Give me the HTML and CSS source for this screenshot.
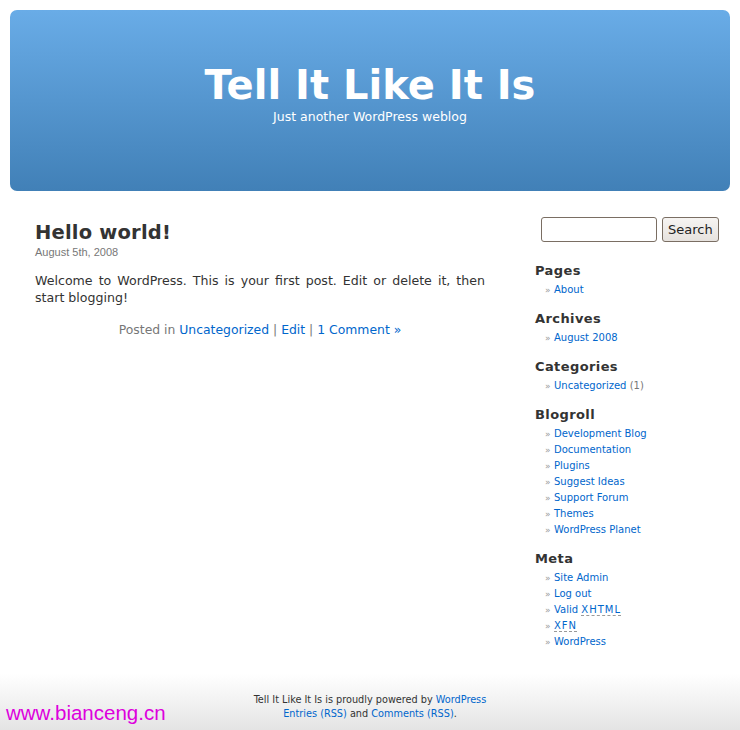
FILE: index.html
```html
<!DOCTYPE html>
<html lang="en">
  <head>
    <meta charset="utf-8" />
    <title>Tell It Like It Is</title>
    <link rel="stylesheet" href="styles.css">
  </head>
  <body>
    <div class="page">
      <div class="header">
        <h1><a href="#">Tell It Like It Is</a></h1>
        <div class="description">Just another WordPress weblog</div>
      </div>

      <div class="wrap">
        <div class="content">
          <div class="post">
            <h2><a href="#">Hello world!</a></h2>
            <small>August 5th, 2008</small>
            <div class="entry">
              <p>Welcome to WordPress. This is your first post. Edit or delete it, then start blogging!</p>
            </div>
            <p class="postmetadata">Posted in <a href="#">Uncategorized</a> | <a href="#">Edit</a> | <a href="#">1 Comment &raquo;</a></p>
          </div>
        </div>

        <div class="sidebar">
          <form class="searchform">
            <input type="text" class="s">
            <button type="button" class="searchsubmit">Search</button>
          </form>
          <ul>
            <li class="widget"><h2>Pages</h2>
              <ul><li><a href="#">About</a></li></ul>
            </li>
            <li class="widget"><h2>Archives</h2>
              <ul><li><a href="#">August 2008</a></li></ul>
            </li>
            <li class="widget"><h2>Categories</h2>
              <ul><li><a href="#">Uncategorized</a> (1)</li></ul>
            </li>
            <li class="widget"><h2>Blogroll</h2>
              <ul>
                <li><a href="#">Development Blog</a></li>
                <li><a href="#">Documentation</a></li>
                <li><a href="#">Plugins</a></li>
                <li><a href="#">Suggest Ideas</a></li>
                <li><a href="#">Support Forum</a></li>
                <li><a href="#">Themes</a></li>
                <li><a href="#">WordPress Planet</a></li>
              </ul>
            </li>
            <li class="widget"><h2>Meta</h2>
              <ul>
                <li><a href="#">Site Admin</a></li>
                <li><a href="#">Log out</a></li>
                <li><a href="#">Valid <abbr>XHTML</abbr></a></li>
                <li><a href="#"><abbr>XFN</abbr></a></li>
                <li><a href="#">WordPress</a></li>
              </ul>
            </li>
          </ul>
        </div>
      </div>

      <div class="footer">
        <p>Tell It Like It Is is proudly powered by <a href="#">WordPress</a><br>
        <a href="#">Entries (RSS)</a> and <a href="#">Comments (RSS)</a>.</p>
      </div>
      <div class="mark">www.bianceng.cn</div>
    </div>
  </body>
</html>
```

FILE: styles.css
```css
body{
  margin:0;
  background:#fff;
  color:#333;
  font:13px 'DejaVu Sans',sans-serif;
}
*{box-sizing:border-box}
a{color:#06c;text-decoration:none}

.page{
  width:740px;
  height:730px;
  position:relative;
  display:flex;
  flex-direction:column;
  overflow:hidden;
}

.header{
  margin:10px 10px 0;
  height:181px;
  border-radius:7px;
  background:linear-gradient(#69ace7,#4180b7);
  text-align:center;
  padding-top:50px;
}
.header h1{
  margin:0;
  font-size:40px;
  line-height:50px;
  font-weight:bold;
}
.header h1 a{color:#fff}
.header .description{
  color:#fff;
  font-size:12.5px;
  line-height:14px;
}

.wrap{
  display:flex;
  flex:1;
}
.content{
  width:450px;
  margin-left:35px;
  padding-top:31px;
}
.post h2{
  margin:0;
  font-size:19.5px;
  line-height:22px;
  font-weight:bold;
  letter-spacing:.2px;
}
.post h2 a{color:#333}
.post small{
  display:block;
  margin-top:1px;
  font:11px/14px 'Liberation Sans',sans-serif;
  color:#777;
}
.entry p{
  margin:13px 0 0;
  text-align:justify;
  font-size:12.6px;
  line-height:17px;
}
.postmetadata{
  margin:16px 0 0;
  text-align:center;
  font-size:12.4px;
  color:#777;
}

.sidebar{
  margin-left:50px;
  width:200px;
  padding-top:26px;
  font-size:10px;
}
.searchform{
  display:flex;
  gap:5px;
  margin:0 0 20px 6px;
}
.searchform .s{
  width:116px;
  height:25px;
  border:1px solid #7a6e63;
  border-radius:3px;
  background:#fff;
}
.searchform .searchsubmit{
  height:25px;
  padding:0 5px;
  border:1px solid #7a6e63;
  border-radius:3px;
  background:linear-gradient(#f6f4f2,#e6e2de);
  color:#222;
  font:13px 'DejaVu Sans',sans-serif;
}
.sidebar ul{
  list-style:none;
  margin:0;
  padding:0;
}
.sidebar .widget{
  margin-bottom:12px;
}
.sidebar h2{
  margin:0 0 3px;
  font-size:13px;
  line-height:17px;
  font-weight:bold;
  color:#333;
  letter-spacing:.4px;
}
.sidebar .widget li{
  line-height:16px;
  padding-left:10px;
  color:#777;
}
.sidebar .widget li:before{
  content:"\00BB";
  color:#999;
  font-size:9px;
  display:inline-block;
  width:9px;
  vertical-align:top;
  line-height:16px;
}
abbr{
  text-decoration:none;
  border-bottom:1px dashed #999;
  letter-spacing:.1em;
}

.footer{
  height:56px;
  background:linear-gradient(#fff,#e4e4e4);
  text-align:center;
  font:10.8px/14px 'DejaVu Sans Condensed','DejaVu Sans',sans-serif;
  color:#333;
  padding-top:19px;
}
.footer p{margin:0}
.mark{
  position:absolute;
  left:6px;
  bottom:5px;
  color:#dd00dd;
  font:20.5px 'Liberation Sans',sans-serif;
}
```
